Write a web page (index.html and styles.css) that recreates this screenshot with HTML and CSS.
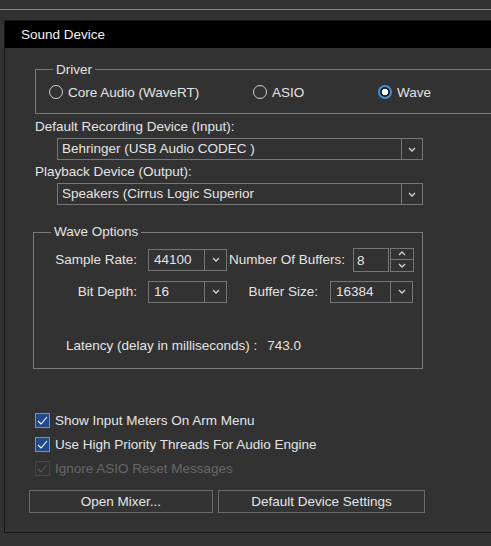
FILE: index.html
```html
<!DOCTYPE html>
<html>
<head>
<meta charset="utf-8">
<link rel="stylesheet" href="styles.css">
</head>
<body>
<div class="topbar"></div>
<div class="panel">
  <div class="panel-header">Sound Device</div>
  <div class="panel-body">
    <fieldset class="group driver">
      <legend>Driver</legend>
      <div class="radios">
        <label class="radio"><span class="radio-dot"></span>Core Audio (WaveRT)</label>
        <label class="radio"><span class="radio-dot"></span>ASIO</label>
        <label class="radio"><span class="radio-dot checked"></span>Wave</label>
      </div>
    </fieldset>

    <div class="field-label">Default Recording Device (Input):</div>
    <div class="select wide">
      <span class="select-value">Behringer (USB Audio CODEC )</span>
      <span class="select-btn"><svg width="8" height="5" viewBox="0 0 8 5"><polyline points="1,1 4,4 7,1" fill="none" stroke="#d4d4d4" stroke-width="1.3"/></svg></span>
    </div>
    <div class="field-label">Playback Device (Output):</div>
    <div class="select wide">
      <span class="select-value">Speakers (Cirrus Logic Superior</span>
      <span class="select-btn"><svg width="8" height="5" viewBox="0 0 8 5"><polyline points="1,1 4,4 7,1" fill="none" stroke="#d4d4d4" stroke-width="1.3"/></svg></span>
    </div>

    <fieldset class="group wave">
      <legend>Wave Options</legend>
      <div class="wave-row">
        <span class="wave-label">Sample Rate:</span>
        <div class="select small">
          <span class="select-value">44100</span>
          <span class="select-btn"><svg width="8" height="5" viewBox="0 0 8 5"><polyline points="1,1 4,4 7,1" fill="none" stroke="#d4d4d4" stroke-width="1.3"/></svg></span>
        </div>
        <div class="wave-right">
          <span class="right-label buffers-label">Number Of Buffers:</span>
          <div class="spin-input">8</div>
          <div class="spinner">
            <span class="spin-half"><svg width="8" height="5" viewBox="0 0 8 5"><polyline points="1,4 4,1 7,4" fill="none" stroke="#d4d4d4" stroke-width="1.3"/></svg></span>
            <span class="spin-half"><svg width="8" height="5" viewBox="0 0 8 5"><polyline points="1,1 4,4 7,1" fill="none" stroke="#d4d4d4" stroke-width="1.3"/></svg></span>
          </div>
        </div>
      </div>
      <div class="wave-row second">
        <span class="wave-label">Bit Depth:</span>
        <div class="select small">
          <span class="select-value">16</span>
          <span class="select-btn"><svg width="8" height="5" viewBox="0 0 8 5"><polyline points="1,1 4,4 7,1" fill="none" stroke="#d4d4d4" stroke-width="1.3"/></svg></span>
        </div>
        <div class="wave-right">
          <span class="right-label size-label">Buffer Size:</span>
          <div class="select medium">
            <span class="select-value">16384</span>
            <span class="select-btn"><svg width="8" height="5" viewBox="0 0 8 5"><polyline points="1,1 4,4 7,1" fill="none" stroke="#d4d4d4" stroke-width="1.3"/></svg></span>
          </div>
        </div>
      </div>
      <div class="latency">Latency (delay in milliseconds) :<span class="latency-value">743.0</span></div>
    </fieldset>

    <div class="checks">
      <div class="check-row">
        <span class="checkbox on"><svg width="11" height="9" viewBox="0 0 11 9"><polyline points="1,5 4,8 10,1" fill="none" stroke="#ffffff" stroke-width="1.1"/></svg></span>
        <span>Show Input Meters On Arm Menu</span>
      </div>
      <div class="check-row">
        <span class="checkbox on"><svg width="11" height="9" viewBox="0 0 11 9"><polyline points="1,5 4,8 10,1" fill="none" stroke="#ffffff" stroke-width="1.1"/></svg></span>
        <span>Use High Priority Threads For Audio Engine</span>
      </div>
      <div class="check-row disabled">
        <span class="checkbox off"><svg width="11" height="9" viewBox="0 0 11 9"><polyline points="1,5 4,8 10,1" fill="none" stroke="#5a5a5a" stroke-width="1.1"/></svg></span>
        <span>Ignore ASIO Reset Messages</span>
      </div>
    </div>

    <div class="buttons">
      <button class="btn mixer">Open Mixer...</button>
      <button class="btn defaults">Default Device Settings</button>
    </div>
  </div>
</div>
</body>
</html>
```
FILE: styles.css
```css
html, body {
  margin: 0;
  padding: 0;
  background: #323232;
  width: 491px;
  height: 546px;
  overflow: hidden;
}

body {
  font-family: "Liberation Sans", Arial, sans-serif;
  font-size: 13.5px;
  color: #e4e4e4;
}

.topbar {
  height: 9px;
  border-bottom: 1px solid #858585;
}

.panel {
  margin: 10px 0 0 4px;
  width: 487px;
  height: 513px;
  box-sizing: border-box;
  border: 1px solid #151515;
  border-right: none;
}

.panel-header {
  background: #000;
  height: 27px;
  line-height: 27px;
  padding-left: 16px;
  color: #f0f0f0;
}

.panel-body {
  padding-left: 30px;
}

/* group boxes */
.group {
  border: 1px solid #7a7a7a;
  margin: 0;
  min-width: 0;
  box-sizing: border-box;
}

.group legend {
  padding: 0 3px;
  line-height: 15px;
  color: #e4e4e4;
}

.driver {
  margin-top: 14px;
  width: 456px;
  border-right: none;
  padding: 7px 0 13px 13px;
}

.driver legend {
  margin-left: 4px;
}

.radios {
  display: grid;
  grid-template-columns: 204px 125px auto;
  height: 16px;
}

.radio {
  display: flex;
  align-items: center;
  gap: 5px;
  height: 16px;
}

.radio-dot {
  width: 14px;
  height: 14px;
  box-sizing: border-box;
  border: 1.5px solid #d2d2d2;
  border-radius: 50%;
  flex: none;
}

.radio-dot.checked {
  border: 2px solid #3d93de;
  background: radial-gradient(circle, #ffffff 0 3px, #1c1c1c 3.6px);
}

/* device selects */
.field-label {
  line-height: 17px;
  margin-top: 4px;
}

.field-label + .select {
  margin-top: 3px;
}

.select + .field-label {
  margin-top: 3px;
}

.select {
  display: flex;
  height: 22px;
  box-sizing: border-box;
  border: 1px solid #767676;
  flex: none;
}

.select-value {
  flex: 1;
  line-height: 20px;
  padding-left: 4px;
  white-space: nowrap;
  overflow: hidden;
}

.select-btn {
  width: 22px;
  box-sizing: border-box;
  border-left: 1px solid #767676;
  display: flex;
  align-items: center;
  justify-content: center;
  flex: none;
}

.select.wide {
  margin-left: 22px;
  width: 366px;
}

.select.wide .select-btn {
  width: 21px;
}

.select.small {
  width: 79px;
}

.select.small .select-value,
.select.medium .select-value {
  padding-left: 5px;
}

.select.medium {
  width: 83px;
  margin-right: 1px;
}

/* wave options */
.wave {
  margin-top: 19px;
  margin-left: -2px;
  width: 390px;
  padding: 8px 8px 14px 0;
}

.wave legend {
  margin-left: 17px;
  line-height: 16px;
}

.wave-row {
  display: flex;
  align-items: center;
  height: 23px;
}

.wave-row.second {
  margin-top: 9px;
}

.wave-label {
  width: 103px;
  text-align: right;
  margin-right: 11px;
  flex: none;
}

.wave-right {
  margin-left: auto;
  display: flex;
  align-items: center;
}

.buffers-label {
  margin-right: 8px;
}

.size-label {
  margin-right: 12px;
}

.spin-input {
  width: 36px;
  height: 24px;
  box-sizing: border-box;
  border: 1px solid #767676;
  padding-left: 3px;
  line-height: 24px;
  margin-right: 1px;
}

.spinner {
  width: 24px;
  height: 24px;
  box-sizing: border-box;
  border: 1px solid #767676;
  display: flex;
  flex-direction: column;
}

.spin-half {
  flex: 1;
  display: flex;
  align-items: center;
  justify-content: center;
}

.spin-half + .spin-half {
  border-top: 1px solid #767676;
}

.latency {
  margin-top: 35px;
  padding-left: 32px;
  line-height: 16px;
}

.latency-value {
  margin-left: 10px;
}

/* checkboxes */
.checks {
  margin-top: 39px;
}

.check-row {
  display: flex;
  align-items: center;
  gap: 5px;
  height: 24px;
}

.checkbox {
  width: 15px;
  height: 15px;
  box-sizing: border-box;
  display: flex;
  align-items: center;
  justify-content: center;
  flex: none;
}

.checkbox.on {
  background: #22498c;
  border: 1px solid #7b8fbb;
}

.checkbox.off {
  border: 1px solid #474747;
}

.check-row.disabled {
  color: #676767;
}

/* buttons */
.buttons {
  display: flex;
  gap: 5px;
  margin-top: 10px;
  margin-left: -6px;
}

.btn {
  font: inherit;
  color: #e6e6e6;
  background: #333333;
  border: 1px solid #6b6b6b;
  height: 23px;
  padding: 0;
  margin: 0;
  line-height: 21px;
  text-align: center;
}

.btn.mixer {
  width: 184px;
}

.btn.defaults {
  width: 207px;
}
```
